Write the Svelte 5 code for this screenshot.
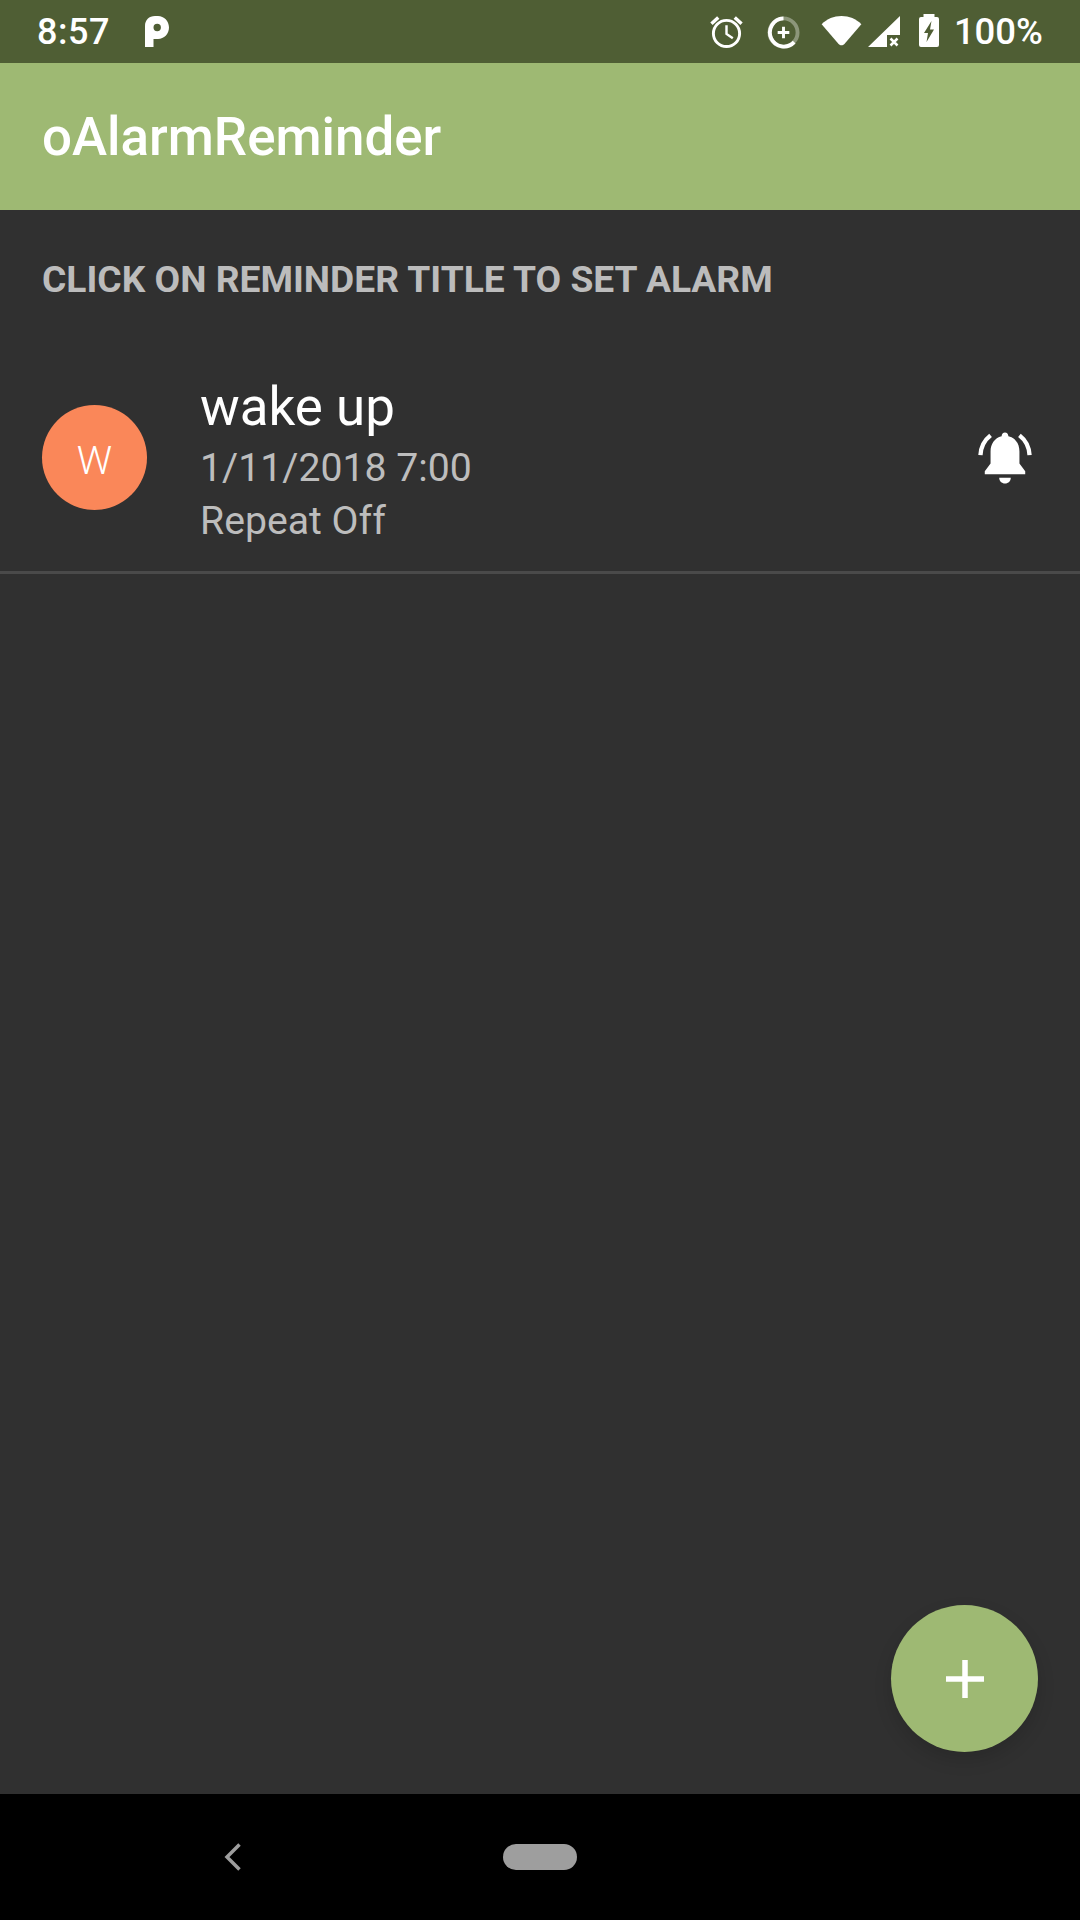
<script>
  let reminders = [
    { letter: 'W', title: 'wake up', when: '1/11/2018 7:00', repeat: 'Repeat Off' }
  ];
</script>

<div class="screen">
  <div class="status-bar">
    <span class="clock">8:57</span>
    <svg class="parking" viewBox="0 0 24 31" width="24" height="31">
      <path fill="#fff" fill-rule="evenodd" d="M0 10C0 4 4 0 10 0h3C19 0 24 5 24 11.500S19 23 13 23H8.500V31H0ZM8.500 11.500a3.700 3.700 0 0 0 7.400 0a3.700 3.700 0 0 0-7.400 0Z"/>
    </svg>
    <div class="spacer"></div>
    <svg class="status-icon" viewBox="0 0 34 34" width="33" height="33">
      <g fill="none" stroke="#fff" stroke-width="3">
        <circle cx="17" cy="19" r="13.500"/>
        <path d="M17 10.500v9l6.500 4.500" stroke-width="2.500"/>
        <path d="M1.500 9 8.500 2.500M32.500 9 25.500 2.500" stroke-width="3.500"/>
      </g>
    </svg>
    <svg class="status-icon saver" viewBox="0 0 34 34" width="33" height="33">
      <g fill="none" stroke-width="4">
        <circle cx="17" cy="17" r="14.500" stroke="#fff" stroke-opacity="0.35"/>
        <path d="M17 2.500A14.500 14.500 0 1 0 28 27" stroke="#fff"/>
        <path d="M17 11v12M11 17h12" stroke="#fff" stroke-width="3"/>
      </g>
    </svg>
    <svg class="status-icon wifi" viewBox="0 0 42 32" width="41" height="31">
      <path fill="#fff" d="M0.500 9.500C6 4 13 1 21 1s15 3 20.500 8.500L24 30c-1.600 1.800-4.400 1.800-6 0Z"/>
    </svg>
    <svg class="status-icon signal" viewBox="0 0 32 32" width="32" height="32">
      <path fill="#fff" d="M32 0V19H19V31H0Z"/>
      <path d="M22.500 22.500l7 7M29.500 22.500l-7 7" stroke="#fff" stroke-width="2.500"/>
    </svg>
    <svg class="status-icon battery" viewBox="0 0 20 33" width="20" height="33">
      <path fill="#fff" fill-rule="evenodd" d="M4.500 0h11v3H18a2 2 0 0 1 2 2v26a2 2 0 0 1-2 2H2a2 2 0 0 1-2-2V5a2 2 0 0 1 2-2h2.500ZM12.500 7 5 19H9L7.500 28 15 15.500H11Z"/>
    </svg>
    <span class="percent">100%</span>
  </div>

  <header class="app-bar">oAlarmReminder</header>

  <main class="content">
    <h2 class="section">CLICK ON REMINDER TITLE TO SET ALARM</h2>

    {#each reminders as item}
      <div class="row">
        <div class="avatar">{item.letter}</div>
        <div class="text">
          <div class="title">{item.title}</div>
          <div class="sub">{item.when}</div>
          <div class="sub">{item.repeat}</div>
        </div>
        <svg class="bell" viewBox="0 0 56 54" width="56" height="52">
          <path fill="#fff" d="M28 0.500c2 0 3.500 1.500 3.500 3.800 7.500 1.700 11.500 8 11.500 16v12.500l6 8v3.200H7v-3.200l6-8V20.300c0-8 4-14.100 11.500-16C24.500 2 26 .5 28 .5Z"/>
          <path fill="#fff" d="M22 47.500h12c0 3.500-2.500 6-6 6S22 51 22 47.500Z"/>
          <path fill="none" stroke="#fff" stroke-width="4.500" d="M2.500 24C3 15 6.500 8.500 13 3.500M53.500 24C53 15 49.500 8.500 43 3.500"/>
        </svg>
      </div>
    {/each}

    <button class="fab" aria-label="Add reminder">
      <svg viewBox="0 0 38 38" width="38" height="38">
        <path d="M19 0v38M0 19h38" stroke="#fff" stroke-width="5.500"/>
      </svg>
    </button>
  </main>

  <nav class="nav-bar">
    <svg class="back" viewBox="0 0 18 28" width="18" height="28">
      <path d="M15.500 1.500 3 14l12.500 12.500" fill="none" stroke="#9e9e9e" stroke-width="3.500"/>
    </svg>
    <div class="home"></div>
  </nav>
</div>

<style>
  :global(body) {
    margin: 0;
    background: #303030;
  }

  .screen {
    width: 1080px;
    height: 1920px;
    display: flex;
    flex-direction: column;
    font-family: Roboto, "Liberation Sans", sans-serif;
    overflow: hidden;
  }

  .status-bar {
    height: 63px;
    flex: none;
    background: #4f5e34;
    color: #fff;
    display: flex;
    align-items: center;
    padding: 0 37px 0 37px;
    box-sizing: border-box;
  }

  .clock {
    font-size: 36px;
    font-weight: 500;
    letter-spacing: 0.5px;
  }

  .parking {
    margin-left: 35px;
  }

  .spacer {
    flex: 1;
  }

  .status-icon {
    display: block;
  }

  .saver {
    margin-left: 24px;
    margin-top: 2px;
  }

  .wifi {
    margin-left: 21px;
    margin-bottom: 2px;
  }

  .signal {
    margin-left: 6px;
  }

  .battery {
    margin-left: 19px;
    margin-bottom: 2px;
  }

  .percent {
    font-size: 36.500px;
    font-weight: 500;
    margin-left: 15px;
  }

  .app-bar {
    height: 147px;
    flex: none;
    background: #9eb973;
    color: #fff;
    display: flex;
    align-items: center;
    padding-left: 42px;
    font-size: 52.900px;
    font-weight: 500;
  }

  .content {
    flex: 1;
    background: #303030;
    position: relative;
  }

  .section {
    margin: 0;
    padding: 48px 42px 0;
    height: 43px;
    line-height: 43px;
    font-size: 37.200px;
    font-weight: 700;
    color: #bcbcbc;
  }

  .row {
    margin-top: 43px;
    height: 227px;
    display: flex;
    align-items: center;
    padding: 0 42px;
    border-bottom: 3px solid #4a4a4a;
  }

  .avatar {
    width: 105px;
    height: 105px;
    flex: none;
    box-sizing: border-box;
    padding-top: 6px;
    border-radius: 50%;
    background: #fa8759;
    color: #fff;
    display: flex;
    align-items: center;
    justify-content: center;
    font-size: 39.400px;
    font-weight: 300;
  }

  .text {
    flex: 1;
    margin-left: 53px;
    margin-top: 5px;
  }

  .title {
    color: #fff;
    font-size: 52.900px;
    line-height: 70px;
  }

  .sub {
    color: #bdbdbd;
    font-size: 39.200px;
    line-height: 53px;
  }

  .bell {
    flex: none;
    margin-right: 5px;
  }

  .fab {
    position: absolute;
    right: 42px;
    bottom: 42px;
    width: 147px;
    height: 147px;
    border: none;
    border-radius: 50%;
    padding: 0;
    background: #9eb973;
    box-shadow: 0 8px 18px rgba(0, 0, 0, 0.14);
    display: flex;
    align-items: center;
    justify-content: center;
  }

  .nav-bar {
    height: 126px;
    flex: none;
    background: #000;
    display: flex;
    align-items: center;
  }

  .back {
    margin-left: 224px;
  }

  .home {
    width: 74px;
    height: 26px;
    margin-left: 261px;
    border-radius: 13px;
    background: #9e9e9e;
  }
</style>
